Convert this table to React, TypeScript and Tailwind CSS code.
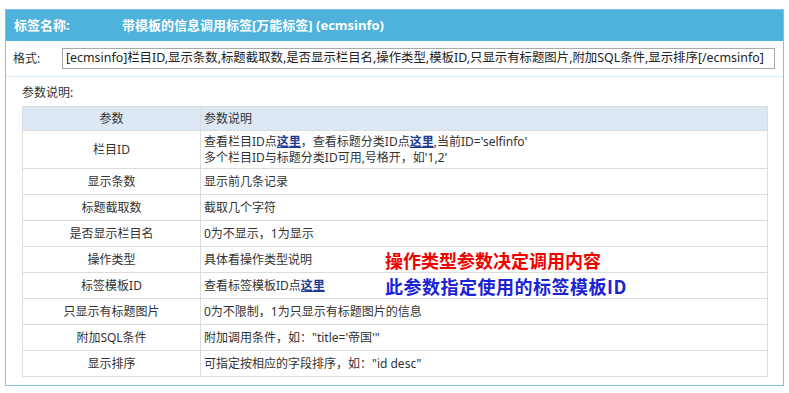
import React from "react";

const font = { fontFamily: '"Noto Sans", "Noto Sans CJK SC", sans-serif' };

function Link() {
  return <a className="font-bold underline text-[#1d3c8f]">这里</a>;
}

const rows: { p: string; d: React.ReactNode; h?: string }[] = [
  {
    p: "栏目ID",
    h: "h-[38px]",
    d: (
      <div className="leading-[16px]">
        <div>
          查看栏目ID点<Link />，查看标题分类ID点<Link />,当前ID='selfinfo'
        </div>
        <div>多个栏目ID与标题分类ID可用,号格开，如'1,2'</div>
      </div>
    ),
  },
  { p: "显示条数", d: "显示前几条记录" },
  { p: "标题截取数", d: "截取几个字符" },
  { p: "是否显示栏目名", d: "0为不显示，1为显示" },
  {
    p: "操作类型",
    d: (
      <div className="flex items-center">
        <span className="w-[181px]">具体看操作类型说明</span>
        <span className="text-[18px] font-bold text-[#f20000] leading-[22px]" style={{ fontFamily: '"Noto Sans CJK SC", serif' }}>
          操作类型参数决定调用内容
        </span>
      </div>
    ),
  },
  {
    p: "标签模板ID",
    d: (
      <div className="flex items-center">
        <span className="w-[181px]">
          查看标签模板ID点<Link />
        </span>
        <span className="text-[18px] font-bold text-[#1c22d6] leading-[22px] tracking-[0.5px]" style={{ fontFamily: '"Noto Sans CJK SC", serif' }}>
          此参数指定使用的标签模板ID
        </span>
      </div>
    ),
  },
  { p: "只显示有标题图片", d: "0为不限制，1为只显示有标题图片的信息" },
  { p: "附加SQL条件", d: "附加调用条件，如：\"title='帝国'\"" },
  { p: "显示排序", d: "可指定按相应的字段排序，如：\"id desc\"" },
];

export default function App() {
  return (
    <div className="w-[789px] h-[393px] bg-white pt-[9px] px-[5px] text-[12px] text-[#333]" style={font}>
      <div className="border border-[#7ec4e4] w-[779px]">
        <div className="h-[31px] bg-[#4fb2dc] flex items-center text-white font-bold text-[13px]">
          <span className="pl-[8px] w-[116px]">标签名称:</span>
          <span>带模板的信息调用标签[万能标签] (ecmsinfo)</span>
        </div>
        <div className="h-[36px] flex items-center pl-[7px] pr-[8px] border-b border-[#d3ebf6]">
          <span className="w-[49px] text-[12px]">格式:</span>
          <div className="flex-1 h-[21px] border border-[#a9a9a9] flex items-center pl-[3px] text-[12.4px] text-[#222] whitespace-nowrap overflow-hidden">
            [ecmsinfo]栏目ID,显示条数,标题截取数,是否显示栏目名,操作类型,模板ID,只显示有标题图片,附加SQL条件,显示排序[/ecmsinfo]
          </div>
        </div>
        <div className="pt-[8px] pb-[8px] pl-[16px] pr-[15px]">
          <div className="leading-[16px] h-[21px]">参数说明:</div>
          <table className="w-[746px] border-collapse">
            <thead>
              <tr className="h-[24px] bg-[#dce9f5]">
                <th className="w-[178px] font-normal text-center border border-[#dcdcdc]">参数</th>
                <th className="font-normal text-left pl-[3px] border border-[#dcdcdc]">参数说明</th>
              </tr>
            </thead>
            <tbody>
              {rows.map((r, i) => (
                <tr key={i} className={r.h ?? "h-[26px]"}>
                  <td className="text-center border border-[#dcdcdc]">{r.p}</td>
                  <td className="pl-[3px] border border-[#dcdcdc] whitespace-nowrap">{r.d}</td>
                </tr>
              ))}
            </tbody>
          </table>
        </div>
      </div>
    </div>
  );
}
